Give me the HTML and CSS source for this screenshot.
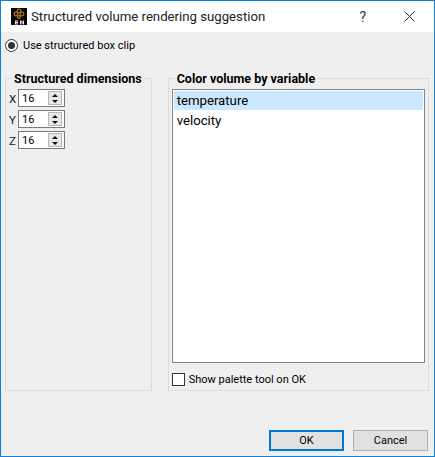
FILE: index.html
```html
<!DOCTYPE html>
<html>
<head>
<meta charset="utf-8">
<title>Structured volume rendering suggestion</title>
<link rel="stylesheet" href="styles.css">
</head>
<body>
<div class="window">
  <header class="titlebar">
    <svg class="app-icon" width="16" height="17" viewBox="0 0 16 17">
      <rect width="16" height="17" fill="#0a0a0a"/>
      <g fill="none" stroke="#a8701c" stroke-width="1.300">
        <circle cx="8" cy="3" r="1.800"/>
        <circle cx="5" cy="6" r="1.800"/>
        <circle cx="11" cy="6" r="1.800"/>
        <circle cx="8" cy="9" r="1.500"/>
      </g>
      <path d="M4 12.500h3v1H5v.5h2v1H5v.5h2v1H4zM9 12.500h1l1.500 2.500v-2.500H13v4h-1l-1.700-2.600v2.600H9z" fill="#e8e8e8"/>
    </svg>
    <span class="title">Structured volume rendering suggestion</span>
    <span class="help">?</span>
    <svg class="close" width="11" height="11" viewBox="0 0 12 12"><path d="M.5.500l11 11M11.500.500l-11 11" stroke="#1a1a1a" stroke-width="1" fill="none"/></svg>
  </header>
  <main class="content">
    <label class="radio-row"><span class="radio"><span class="radio-dot"></span></span><span class="label-text">Use structured box clip</span></label>
    <div class="groups">
      <section class="group group-left">
        <h2 class="legend">Structured dimensions</h2>
        <div class="spin-row"><span class="axis">X</span><div class="spin"><span class="spin-val">16</span><span class="spin-btns"><span class="up"></span><span class="down"></span></span></div></div>
        <div class="spin-row"><span class="axis">Y</span><div class="spin"><span class="spin-val">16</span><span class="spin-btns"><span class="up"></span><span class="down"></span></span></div></div>
        <div class="spin-row"><span class="axis">Z</span><div class="spin"><span class="spin-val">16</span><span class="spin-btns"><span class="up"></span><span class="down"></span></span></div></div>
      </section>
      <section class="group group-right">
        <h2 class="legend">Color volume by variable</h2>
        <ul class="list">
          <li class="item selected">temperature</li>
          <li class="item">velocity</li>
        </ul>
        <label class="check-row"><span class="check"></span><span class="label-text">Show palette tool on OK</span></label>
      </section>
    </div>
    <footer class="buttons">
      <button class="btn btn-default">OK</button>
      <button class="btn">Cancel</button>
    </footer>
  </main>
</div>
</body>
</html>
```
FILE: styles.css
```css
* { box-sizing: border-box; }
html, body { margin: 0; padding: 0; }
body {
  width: 435px;
  height: 457px;
  overflow: hidden;
  font-family: Roboto, "Open Sans", sans-serif;
  font-size: 12px;
  color: #000;
}
.window {
  width: 435px;
  height: 457px;
  border: 1px solid #0a80e0;
  display: flex;
  flex-direction: column;
  background: #efefef;
}
.titlebar {
  height: 31px;
  flex: none;
  background: #fff;
  display: flex;
  align-items: center;
  padding-left: 10px;
}
.app-icon { flex: none; }
.title {
  margin-left: 4px;
  font-size: 13.200px;
  color: #222;
  white-space: nowrap;
}
.help {
  margin-left: auto;
  font-size: 14px;
  color: #333;
  margin-right: 38px;
}
.close { flex: none; margin-right: 19px; }
.content {
  flex: 1;
  display: flex;
  flex-direction: column;
  padding: 5px 5px 5px 4px;
}
.radio-row {
  display: flex;
  align-items: center;
  height: 16px;
  gap: 5px;
}
.label-text { font-size: 11px; padding-top: 1px; }
.radio {
  width: 13px;
  height: 13px;
  border: 1px solid #333;
  border-radius: 50%;
  display: flex;
  align-items: center;
  justify-content: center;
  background: #fff;
}
.radio-dot {
  width: 7px;
  height: 7px;
  border-radius: 50%;
  background: #333;
}
.groups {
  display: flex;
  gap: 16px;
  margin-top: 25px;
  height: 313px;
}
.group {
  border: 1px solid #dcdcdc;
  position: relative;
  height: 100%;
}
.group-left {
  width: 147px;
  padding: 10px 0 0 3px;
}
.group-right {
  width: 262px;
  padding: 10px 3px 0 3px;
}
.legend {
  position: absolute;
  top: -7px;
  left: 6px;
  margin: 0;
  padding: 0 2px;
  background: #efefef;
  font-size: 12.500px;
  font-weight: 700;
  line-height: 14px;
  white-space: nowrap;
}
.spin-row {
  display: flex;
  align-items: center;
  height: 18px;
  margin-bottom: 3px;
}
.axis { width: 9px; padding-top: 1px; font-size: 11.500px; color: #1a1a1a; }
.spin {
  width: 47px;
  height: 18px;
  border: 1px solid #7a7a7a;
  background: #fff;
  display: flex;
  align-items: center;
  justify-content: space-between;
  padding: 1px 2px 1px 1px;
}
.spin-val { padding: 1px 0 0 2px; font-size: 11px; }
.spin-btns {
  width: 14px;
  height: 14px;
  display: flex;
  flex-direction: column;
  background: #e8e8e8;
  border: 1px solid #b5b5b5;
}
.up, .down { flex: 1; display: flex; align-items: center; justify-content: center; }
.up::before {
  content: "";
  border-left: 3.500px solid transparent;
  border-right: 3.500px solid transparent;
  border-bottom: 3.500px solid #111;
}
.down::before {
  content: "";
  border-left: 3.500px solid transparent;
  border-right: 3.500px solid transparent;
  border-top: 3.500px solid #111;
}
.list {
  list-style: none;
  margin: 0;
  padding: 1px;
  height: 274px;
  border: 1px solid #828790;
  background: #fff;
}
.item {
  height: 19px;
  line-height: 19px;
  padding-left: 3px;
  font-size: 13.200px;
}
.item + .item { margin-top: 1px; }
.selected { background: #cce8ff; }
.check-row {
  display: flex;
  align-items: center;
  gap: 4px;
  margin-top: 9px;
  height: 14px;
}
.check {
  width: 13px;
  height: 13px;
  border: 1px solid #333;
  background: #fff;
}
.buttons {
  display: flex;
  justify-content: flex-end;
  gap: 9px;
  margin-top: auto;
  padding-right: 1px;
}
.btn {
  width: 75px;
  height: 21px;
  margin: 0;
  padding: 0;
  border: 1px solid #adadad;
  background: #e1e1e1;
  font: inherit;
  font-size: 11px;
  color: #000;
}
.btn-default { border: 2px solid #0078d7; }
```
